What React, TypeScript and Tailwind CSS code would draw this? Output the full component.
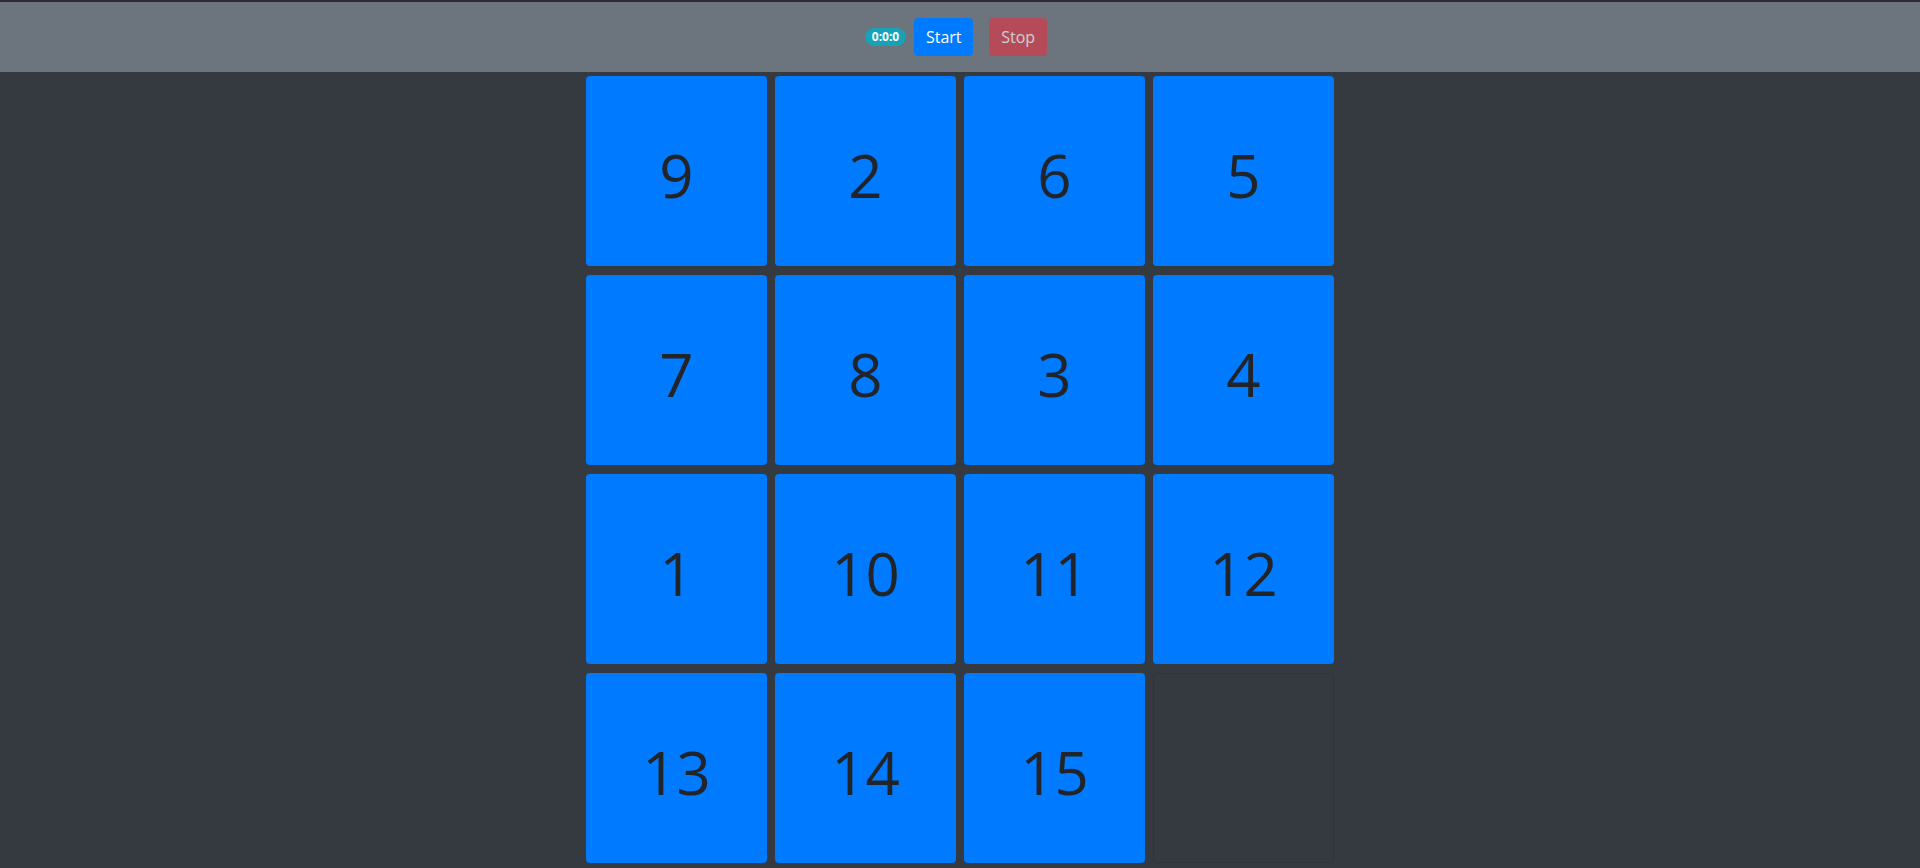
import React from 'react';

const tiles: (number | null)[] = [9, 2, 6, 5, 7, 8, 3, 4, 1, 10, 11, 12, 13, 14, 15, null];

const App: React.FC = () => {
  return (
    <div className="min-h-[868px] bg-[#343a40] font-['Open_Sans','Noto_Sans',sans-serif]">
      <header className="h-[72px] border-t-2 border-[#2e2a31] bg-[#6c757d] flex items-center justify-center pr-2">
        <span className="h-[18px] px-[7px] rounded-full bg-[#17a2b8] text-white text-[12px] font-bold leading-[18px] mr-2">
          0:0:0
        </span>
        <button className="h-[38px] w-[59px] rounded bg-[#007bff] text-white text-[16px] leading-6">
          Start
        </button>
        <button disabled className="h-[38px] w-[58px] ml-4 rounded bg-[#dc3545] text-white text-[16px] leading-6 opacity-65">
          Stop
        </button>
      </header>
      <main className="flex justify-center pt-1">
        <div className="grid grid-cols-[repeat(4,181px)] auto-rows-[190px] gap-x-2 gap-y-[9px]">
          {tiles.map((t, i) =>
            t === null ? (
              <div key={i} className="rounded border border-black/10 bg-[#343a40]" />
            ) : (
              <div
                key={i}
                className="rounded bg-[#007bff] flex items-center justify-center text-[60px] font-normal text-[#212529] pt-2"
              >
                {t}
              </div>
            )
          )}
        </div>
      </main>
    </div>
  );
};

export default App;
